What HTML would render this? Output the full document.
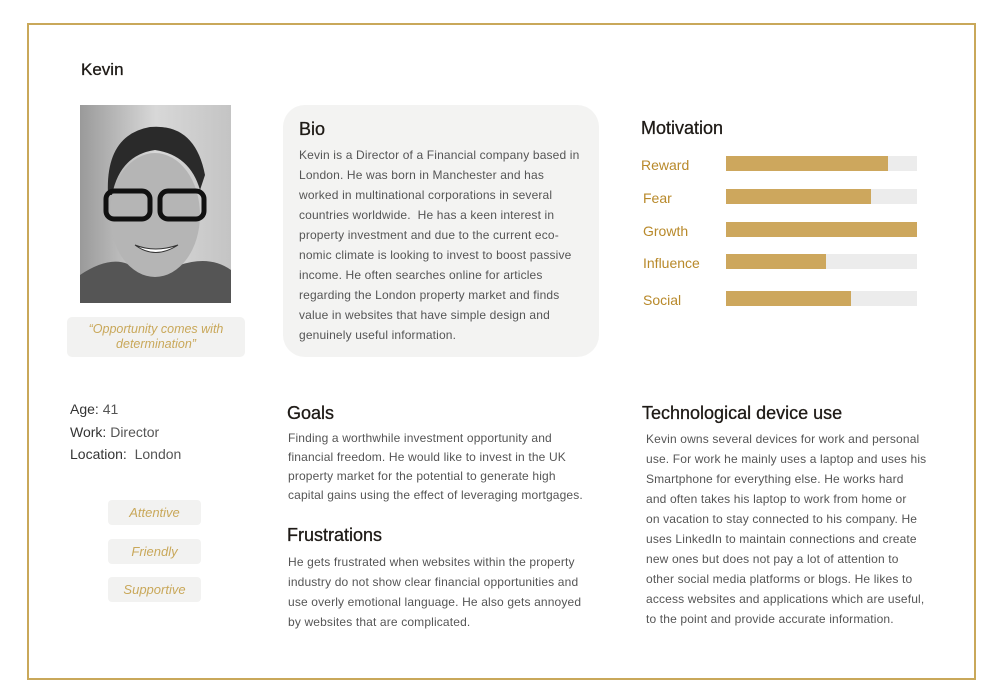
<!DOCTYPE html>
<html><head><meta charset="utf-8"><style>
*{margin:0;padding:0;box-sizing:border-box}
body{width:1000px;height:700px;background:#fff;font-family:"Liberation Sans",sans-serif;position:relative;overflow:hidden;color:#222}
.frame{position:absolute;left:27px;top:23px;width:949px;height:657px;border:2px solid #c9a85a}
.a{position:absolute}
h2{font-weight:normal;font-size:18px;color:#1e1a16;position:absolute;-webkit-text-stroke:0.3px #1e1a16}
.p{position:absolute;font-size:12px;letter-spacing:0.15px;color:#555;line-height:20px;white-space:nowrap}
.lab{position:absolute;font-size:14px;color:#b8892a}
.bar{position:absolute;left:726px;width:191px;height:15px;background:#ececec}
.bar i{display:block;height:100%;background:#cda75d}
.tag{position:absolute;left:108px;width:93px;height:25px;background:#f2f2f1;border-radius:4px;color:#c9a85a;font-style:italic;font-size:13px;text-align:center;line-height:25px}
.info{position:absolute;left:70px;font-size:14px;color:#333}
</style></head><body>
<div class="frame"></div>
<div class="a" style="left:81px;top:60px;font-size:17px;color:#1e1a16;-webkit-text-stroke:0.3px #1e1a16">Kevin</div>
<svg class="a" style="left:80px;top:105px" width="151" height="198" viewBox="0 0 151 198">
<defs><linearGradient id="g" x1="0" x2="1"><stop offset="0" stop-color="#9a9a9a"/><stop offset=".5" stop-color="#d8d8d8"/><stop offset="1" stop-color="#c4c4c4"/></linearGradient></defs>
<rect width="151" height="198" fill="url(#g)"/>
<path d="M0 198 L0 170 Q30 150 50 160 L100 160 Q130 150 151 165 L151 198Z" fill="#555"/>
<ellipse cx="75" cy="110" rx="45" ry="62" fill="#b5b5b5"/>
<path d="M28 90 Q25 30 70 22 Q115 18 125 70 L120 85 Q110 50 75 45 Q40 50 32 90Z" fill="#2a2a2a"/>
<rect x="26" y="86" width="44" height="28" rx="8" fill="none" stroke="#111" stroke-width="5"/>
<rect x="80" y="86" width="44" height="28" rx="8" fill="none" stroke="#111" stroke-width="5"/>
<path d="M55 140 Q75 155 98 140 Q75 148 55 140Z" fill="#fff" stroke="#333"/>
</svg>
<div class="a" style="left:67px;top:317px;width:178px;height:40px;background:#f2f2f1;border-radius:5px;color:#c9a85a;font-style:italic;font-size:12.5px;text-align:center;line-height:15px;padding-top:5px">“Opportunity comes with<br>determination”</div>
<div class="a" style="left:283px;top:105px;width:316px;height:252px;background:#f3f3f2;border-radius:22px"></div>
<h2 style="left:299px;top:119px">Bio</h2>
<div class="p" style="left:299px;top:145px">Kevin is a Director of a Financial company based in<br>London. He was born in Manchester and has<br>worked in multinational corporations in several<br>countries worldwide.&nbsp; He has a keen interest in<br>property investment and due to the current eco-<br>nomic climate is looking to invest to boost passive<br>income. He often searches online for articles<br>regarding the London property market and finds<br>value in websites that have simple design and<br>genuinely useful information.</div>
<h2 style="left:641px;top:118px">Motivation</h2>
<div class="lab" style="left:641px;top:157px">Reward</div>
<div class="lab" style="left:643px;top:190px">Fear</div>
<div class="lab" style="left:643px;top:223px">Growth</div>
<div class="lab" style="left:643px;top:255px">Influence</div>
<div class="lab" style="left:643px;top:292px">Social</div>
<div class="bar" style="top:156px"><i style="width:162px"></i></div>
<div class="bar" style="top:189px"><i style="width:145px"></i></div>
<div class="bar" style="top:222px"><i style="width:191px"></i></div>
<div class="bar" style="top:254px"><i style="width:100px"></i></div>
<div class="bar" style="top:291px"><i style="width:125px"></i></div>
<div class="info" style="top:401px">Age: <span style="color:#555">41</span></div>
<div class="info" style="top:424px">Work: <span style="color:#555">Director</span></div>
<div class="info" style="top:446px">Location:&nbsp; <span style="color:#555">London</span></div>
<div class="tag" style="top:500px">Attentive</div>
<div class="tag" style="top:539px">Friendly</div>
<div class="tag" style="top:577px">Supportive</div>
<h2 style="left:287px;top:403px">Goals</h2>
<div class="p" style="left:288px;top:429px;line-height:19px">Finding a worthwhile investment opportunity and<br>financial freedom. He would like to invest in the UK<br>property market for the potential to generate high<br>capital gains using the effect of leveraging mortgages.</div>
<h2 style="left:287px;top:525px">Frustrations</h2>
<div class="p" style="left:288px;top:552px">He gets frustrated when websites within the property<br>industry do not show clear financial opportunities and<br>use overly emotional language. He also gets annoyed<br>by websites that are complicated.</div>
<h2 style="left:642px;top:403px">Technological device use</h2>
<div class="p" style="left:646px;top:429px">Kevin owns several devices for work and personal<br>use. For work he mainly uses a laptop and uses his<br>Smartphone for everything else. He works hard<br>and often takes his laptop to work from home or<br>on vacation to stay connected to his company. He<br>uses LinkedIn to maintain connections and create<br>new ones but does not pay a lot of attention to<br>other social media platforms or blogs. He likes to<br>access websites and applications which are useful,<br>to the point and provide accurate information.</div>
</body></html>
